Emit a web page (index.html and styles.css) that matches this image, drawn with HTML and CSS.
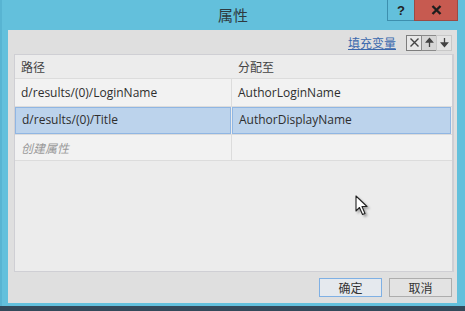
FILE: index.html
```html
<!DOCTYPE html>
<html lang="zh-CN">
<head>
  <meta charset="UTF-8">
  <title>属性</title>
  <link rel="stylesheet" href="styles.css">
</head>
<body>
  <div class="window">
    <div class="titlebar">
      <span></span>
      <span class="title">属性</span>
      <div class="caption-btns">
        <button class="cap-btn cap-help">?</button>
        <button class="cap-btn cap-close">
          <svg width="11" height="10" viewBox="0 0 11 10"><path d="M1.5 1 L9.5 9 M9.5 1 L1.5 9" stroke="#1e1e1e" stroke-width="2.4"/></svg>
        </button>
      </div>
    </div>
    <div class="client">
      <div class="toolbar">
        <a class="link" href="#">填充变量</a>
        <div class="tool-btns">
          <span class="tool-btn tool-del">
            <svg width="11" height="11" viewBox="0 0 11 11"><path d="M1.5 1.5 L9.5 9.5 M9.5 1.5 L1.5 9.5" stroke="#444" stroke-width="1.4"/></svg>
          </span>
          <span class="tool-btn tool-up">
            <svg width="9" height="11" viewBox="0 0 9 11"><path d="M4.5 2 V10 M1.5 5 L4.5 1.5 L7.5 5 Z" stroke="#444" stroke-width="1.3" fill="#444"/></svg>
          </span>
          <span class="tool-btn tool-down">
            <svg width="9" height="11" viewBox="0 0 9 11"><path d="M4.5 1 V9 M1.5 6 L4.5 9.5 L7.5 6 Z" stroke="#444" stroke-width="1.3" fill="#444"/></svg>
          </span>
        </div>
      </div>
      <div class="grid">
        <div class="row row-head">
          <div class="cell">路径</div>
          <div class="cell">分配至</div>
        </div>
        <div class="row">
          <div class="cell">d/results/(0)/LoginName</div>
          <div class="cell">AuthorLoginName</div>
        </div>
        <div class="row row-selected">
          <div class="cell">d/results/(0)/Title</div>
          <div class="cell">AuthorDisplayName</div>
        </div>
        <div class="row row-new">
          <div class="cell">创建属性</div>
          <div class="cell"></div>
        </div>
        <svg class="cursor" width="14" height="22" viewBox="0 0 14 22">
          <path d="M1 1 L1 16 L4.5 12.5 L7.5 19.5 L10 18.5 L7 11.5 L12 11.5 Z" fill="#fff" stroke="#222" stroke-width="1.1" stroke-linejoin="round"/>
        </svg>
      </div>
      <div class="footer">
        <button class="btn btn-default">确定</button>
        <button class="btn">取消</button>
      </div>
    </div>
  </div>
</body>
</html>
```

FILE: styles.css
```css
body {
  margin: 0;
  background: #34495a;
  font-family: "Open Sans", "Noto Sans CJK SC", sans-serif;
  font-size: 12px;
  color: #333;
}
.window {
  width: 465px;
  height: 306px;
  background: #63c0dc;
  box-sizing: border-box;
  border-left: 2px solid #58b4d2;
  display: flex;
  flex-direction: column;
}
/* title bar */
.titlebar {
  height: 30px;
  display: grid;
  grid-template-columns: 71px 1fr 71px;
  padding: 0 7px 0 6px;
}
.title {
  text-align: center;
  font-family: "Noto Sans CJK SC", sans-serif;
  font-size: 15px;
  line-height: 30px;
  color: #2f3a40;
}
.caption-btns {
  display: flex;
  align-items: flex-start;
}
.cap-btn {
  height: 21px;
  border: 1px solid #3d8fae;
  border-top: none;
  padding: 0;
  display: flex;
  align-items: center;
  justify-content: center;
  font-family: "Liberation Sans", sans-serif;
  font-weight: 700;
  font-size: 13px;
  color: #222;
}
.cap-help {
  width: 27px;
  background: #63c0dc;
  border-right: none;
}
.cap-close {
  width: 44px;
  background: #c75a50;
  border-color: #9c4a44;
}
/* client area */
.client {
  margin: 0 8px 3px 6px;
  flex: 1;
  background: #dfdfdf;
  display: flex;
  flex-direction: column;
  padding: 0 3px 0 6px;
}
.toolbar {
  height: 23px;
  display: flex;
  align-items: center;
  justify-content: flex-end;
  padding-right: 2px;
  padding-top: 1px;
}
.link {
  font-family: "Noto Sans CJK SC", sans-serif;
  color: #3b68ad;
  font-size: 12px;
  margin-right: 11px;
  text-decoration: underline;
}
.tool-btns {
  display: flex;
}
.tool-btn {
  width: 14px;
  height: 14px;
  border: 1px solid #c8c8c8;
  background: #e4e4e4;
  display: flex;
  align-items: center;
  justify-content: center;
  margin-left: -1px;
}
.tool-del {
  border-color: #7d7d7d;
  background: #e8e8e8;
}
.tool-up {
  border-color: #8a8a8a;
  background: #d6d6d6;
}
/* grid */
.grid {
  flex: 1;
  position: relative;
  background: #ececec;
  border: 1px solid #cfcfd4;
  border-right-width: 2px;
  padding-top: 1px;
}
.row {
  display: grid;
  grid-template-columns: 217px 1fr;
  height: 27px;
  border-bottom: 1px solid #dcdcdc;
  background: #f2f2f2;
}
.row .cell {
  line-height: 27px;
  padding-left: 6px;
  white-space: nowrap;
  font-size: 12px;
  color: #2e2e2e;
}
.row .cell:first-child {
  border-right: 1px solid #dcdcdc;
}
.row-head {
  height: 22px;
  background: #ececec;
}
.row-head .cell {
  line-height: 22px;
  font-family: "Noto Sans CJK SC", sans-serif;
  font-size: 12px;
  color: #444;
}
.row-head .cell:first-child {
  border-right-color: #ececec;
}
.row-selected {
  background: #ececec;
  height: 27px;
}
.row-selected .cell {
  background: #bcd3ec;
  border: 1px solid #90b6e3;
  line-height: 24px;
  margin-right: 1px;
}
.row-selected .cell:first-child {
  border-right: 1px solid #90b6e3;
}
.row-new {
  height: 25px;
}
.row-new .cell {
  line-height: 25px;
  font-family: "Noto Sans CJK SC", sans-serif;
  font-style: italic;
  font-size: 12px;
  color: #9a9a9a;
}
.cursor {
  position: absolute;
  left: 340px;
  top: 140px;
  filter: drop-shadow(2px 2px 1px rgba(0,0,0,0.3));
}
/* footer */
.footer {
  display: flex;
  justify-content: flex-end;
  gap: 7px;
  padding: 6px 2px 6px 0;
}
.btn {
  width: 63px;
  height: 19px;
  border: 1px solid #adadad;
  background: #e3e3e3;
  font-family: "Noto Sans CJK SC", sans-serif;
  font-size: 12px;
  color: #333;
  padding: 0;
}
.btn-default {
  border-color: #7fb0e4;
  background: #e5e9ee;
}
```
